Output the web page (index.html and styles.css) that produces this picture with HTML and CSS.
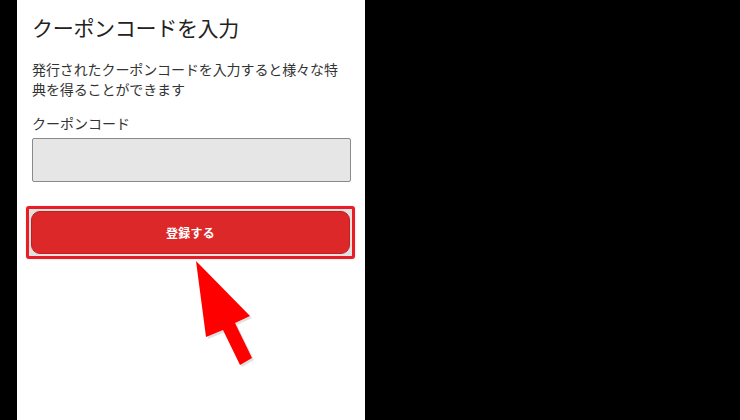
FILE: index.html
```html
<!DOCTYPE html>
<html lang="ja">
<head>
<meta charset="utf-8">
<title>クーポンコードを入力</title>
<link rel="stylesheet" href="styles.css">
</head>
<body>
<div class="stage">
  <main class="panel">
    <h1 class="title">クーポンコードを入力</h1>
    <p class="desc">発行されたクーポンコードを入力すると様々な特典を得ることができます</p>
    <label class="label" for="code">クーポンコード</label>
    <input class="input" id="code" type="text">
    <div class="highlight">
      <button class="submit" type="button">登録する</button>
    </div>
  </main>
  <svg class="arrow" width="740" height="420" viewBox="0 0 740 420" aria-hidden="true">
    <polygon points="196,261 250,316 235,323 252,358 240,365 223,330 206,337" fill="#aaaaaa" opacity="0.35" transform="translate(2,2)"/>
    <polygon points="196,261 250,316 235,323 252,358 240,365 223,330 206,337" fill="#ff0000"/>
  </svg>
</div>
</body>
</html>
```

FILE: styles.css
```css
html, body {
  margin: 0;
  padding: 0;
  background: #000;
}

.stage {
  position: relative;
  width: 740px;
  height: 420px;
  overflow: hidden;
}

.panel {
  box-sizing: border-box;
  width: 348px;
  height: 420px;
  margin-left: 17px;
  background: #fff;
  padding: 12px 14px 0 15px;
  display: flex;
  flex-direction: column;
  font-family: "Noto Sans CJK JP", "Noto Sans", sans-serif;
  color: #222;
}

.title {
  margin: 0;
  font-size: 21px;
  font-weight: 400;
  line-height: 30px;
  letter-spacing: -0.3px;
}

.desc {
  margin: 17px 0 0;
  font-size: 14px;
  line-height: 20px;
  color: #333;
  letter-spacing: -0.1px;
}

.label {
  margin-top: 14px;
  font-size: 14px;
  line-height: 20px;
  color: #333;
}

.input {
  box-sizing: border-box;
  margin: 5px 0 0;
  width: 100%;
  height: 44px;
  background: #e6e6e6;
  border: 1px solid #8a8a8a;
  border-radius: 2px;
}

.highlight {
  box-sizing: border-box;
  margin: 24px -4px 0 -6px;
  border: 3px solid #ec1c24;
  border-radius: 3px;
  padding: 2px;
  background: #e2e2e2;
  box-shadow: 0 0 2px rgba(0, 0, 0, 0.15);
}

.submit {
  display: block;
  width: 100%;
  height: 43px;
  border: 1px solid #c21f1f;
  border-radius: 9px;
  background: #dc2828;
  color: #fff;
  font-family: "Noto Sans CJK JP", "Noto Sans", sans-serif;
  font-size: 12px;
  font-weight: 700;
  letter-spacing: 0.3px;
}

.arrow {
  position: absolute;
  left: 0;
  top: 0;
  pointer-events: none;
}
```
